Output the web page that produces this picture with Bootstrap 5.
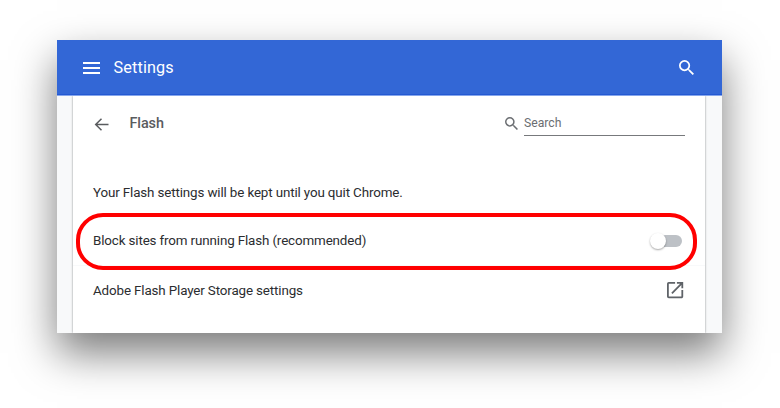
<!DOCTYPE html>
<html lang="en">
<head>
<meta charset="utf-8">
<meta name="viewport" content="width=device-width, initial-scale=1">
<title>Settings</title>
<link href="https://cdn.jsdelivr.net/npm/bootstrap@5.3.0/dist/css/bootstrap.min.css" rel="stylesheet">
<style>
body { font-family: Roboto, sans-serif; font-size: 13.4px; letter-spacing: -.14px; line-height: 20px; color: #2b2d30; background: #fff; }
.page { height: 408px; padding: 40px 0 0 57px; }
.settings-window { width: 665px; height: 293px; background: #f8f9fa; box-shadow: 0 20px 40px rgba(0,0,0,.52); }
.top-bar { height: 56px; padding: 0 28px 0 26px; background: #3367d6; border-bottom: 1px solid #86a6ec; box-shadow: inset 0 -1px #2459d2; }
.top-title { font-size: 16.2px; margin-left: 13.5px; letter-spacing: .15px; }
.panel { width: 632px; height: 237px; margin-left: 16px; box-shadow: 0 0 2px rgba(60,64,67,.6); }
.panel-clip { overflow: hidden; }
.panel-head { height: 54px; padding: 0 20px; color: #5a5c5f; margin-bottom: 18px; }
.panel-title { font-size: 14.4px; margin-left: 19.4px; padding-top: 1px; letter-spacing: -.05px; }
.search-field { width: 161px; height: 26px; padding-top: 4px; margin-left: 6px; border-bottom: 1px solid #77797c; font-size: 12.2px; line-height: 18px; letter-spacing: 0; color: #6b6e72; }
.setting-row { height: 49px; padding: 0 20px; }
.highlight { left: 3px; top: -4px; width: 621px; height: 57px; border: 4px solid #f00; border-radius: 27px; }
.toggle { width: 28px; height: 12px; margin-right: 3px; border-radius: 6px; background: #bdc1c6; }
.toggle-knob { left: -4px; top: -2px; width: 16px; height: 16px; box-shadow: 0 1px 2px rgba(0,0,0,.35); }
</style>
<script src="https://cdn.jsdelivr.net/npm/bootstrap@5.3.0/dist/js/bootstrap.bundle.min.js"></script>
</head>
<body>
<div class="page overflow-hidden">
<main class="settings-window">
  <header class="top-bar d-flex align-items-center text-white">
    <svg width="17" height="14" viewBox="0 0 17 14" fill="currentColor"><path d="M0 1h17v2H0zM0 6h17v2H0zM0 11h17v2H0z"/></svg>
    <span class="top-title">Settings</span>
    <svg class="ms-auto" width="15" height="15" viewBox="3 3 17.5 17.5" fill="currentColor"><path d="M15.5 14h-.79l-.28-.27A6.47 6.47 0 0 0 16 9.5 6.5 6.5 0 1 0 9.5 16c1.61 0 3.09-.59 4.23-1.57l.27.28v.79l5 4.99L20.49 19l-4.99-5zm-6 0C7.01 14 5 11.99 5 9.5S7.01 5 9.5 5 14 7.01 14 9.5 11.99 14 9.5 14z"/></svg>
  </header>
  <div class="panel-clip">
  <section class="panel bg-white">
    <div class="panel-head d-flex align-items-center">
      <svg class="mt-1" width="17" height="14" viewBox="0 0 17 14" fill="none" stroke="currentColor" stroke-width="1.5"><path d="M15.500 6.500H2.800M8.500 .7L2.700 6.500l5.800 5.800"/></svg>
      <span class="panel-title fw-medium">Flash</span>
      <svg class="ms-auto" width="13" height="13" viewBox="3 3 17.5 17.5" fill="#6b6e72"><path d="M15.5 14h-.79l-.28-.27A6.47 6.47 0 0 0 16 9.5 6.5 6.5 0 1 0 9.5 16c1.61 0 3.09-.59 4.23-1.57l.27.28v.79l5 4.99L20.49 19l-4.99-5zm-6 0C7.01 14 5 11.99 5 9.5S7.01 5 9.5 5 14 7.01 14 9.5 11.99 14 9.5 14z"/></svg>
      <div class="search-field">Search</div>
    </div>
    <div class="setting-row d-flex align-items-center">Your Flash settings will be kept until you quit Chrome.</div>
    <div class="setting-row d-flex align-items-center justify-content-between position-relative border-bottom border-light">
      <span>Block sites from running Flash (recommended)</span>
      <span class="toggle position-relative"><span class="toggle-knob position-absolute rounded-circle bg-white"></span></span>
      <span class="highlight position-absolute"></span>
    </div>
    <div class="setting-row d-flex align-items-center justify-content-between">
      <span>Adobe Flash Player Storage settings</span>
      <svg width="18" height="18" viewBox="3 3 20 20" fill="#5f6368"><path d="M19 19H5V5h7V3H5a2 2 0 0 0-2 2v14a2 2 0 0 0 2 2h14c1.100 0 2-.9 2-2v-7h-2v7zM14 3v2h3.590l-9.830 9.830 1.410 1.410L19 6.410V10h2V3h-7z"/></svg>
    </div>
  </section>
  </div>
</main>
</div>
</body>
</html>
